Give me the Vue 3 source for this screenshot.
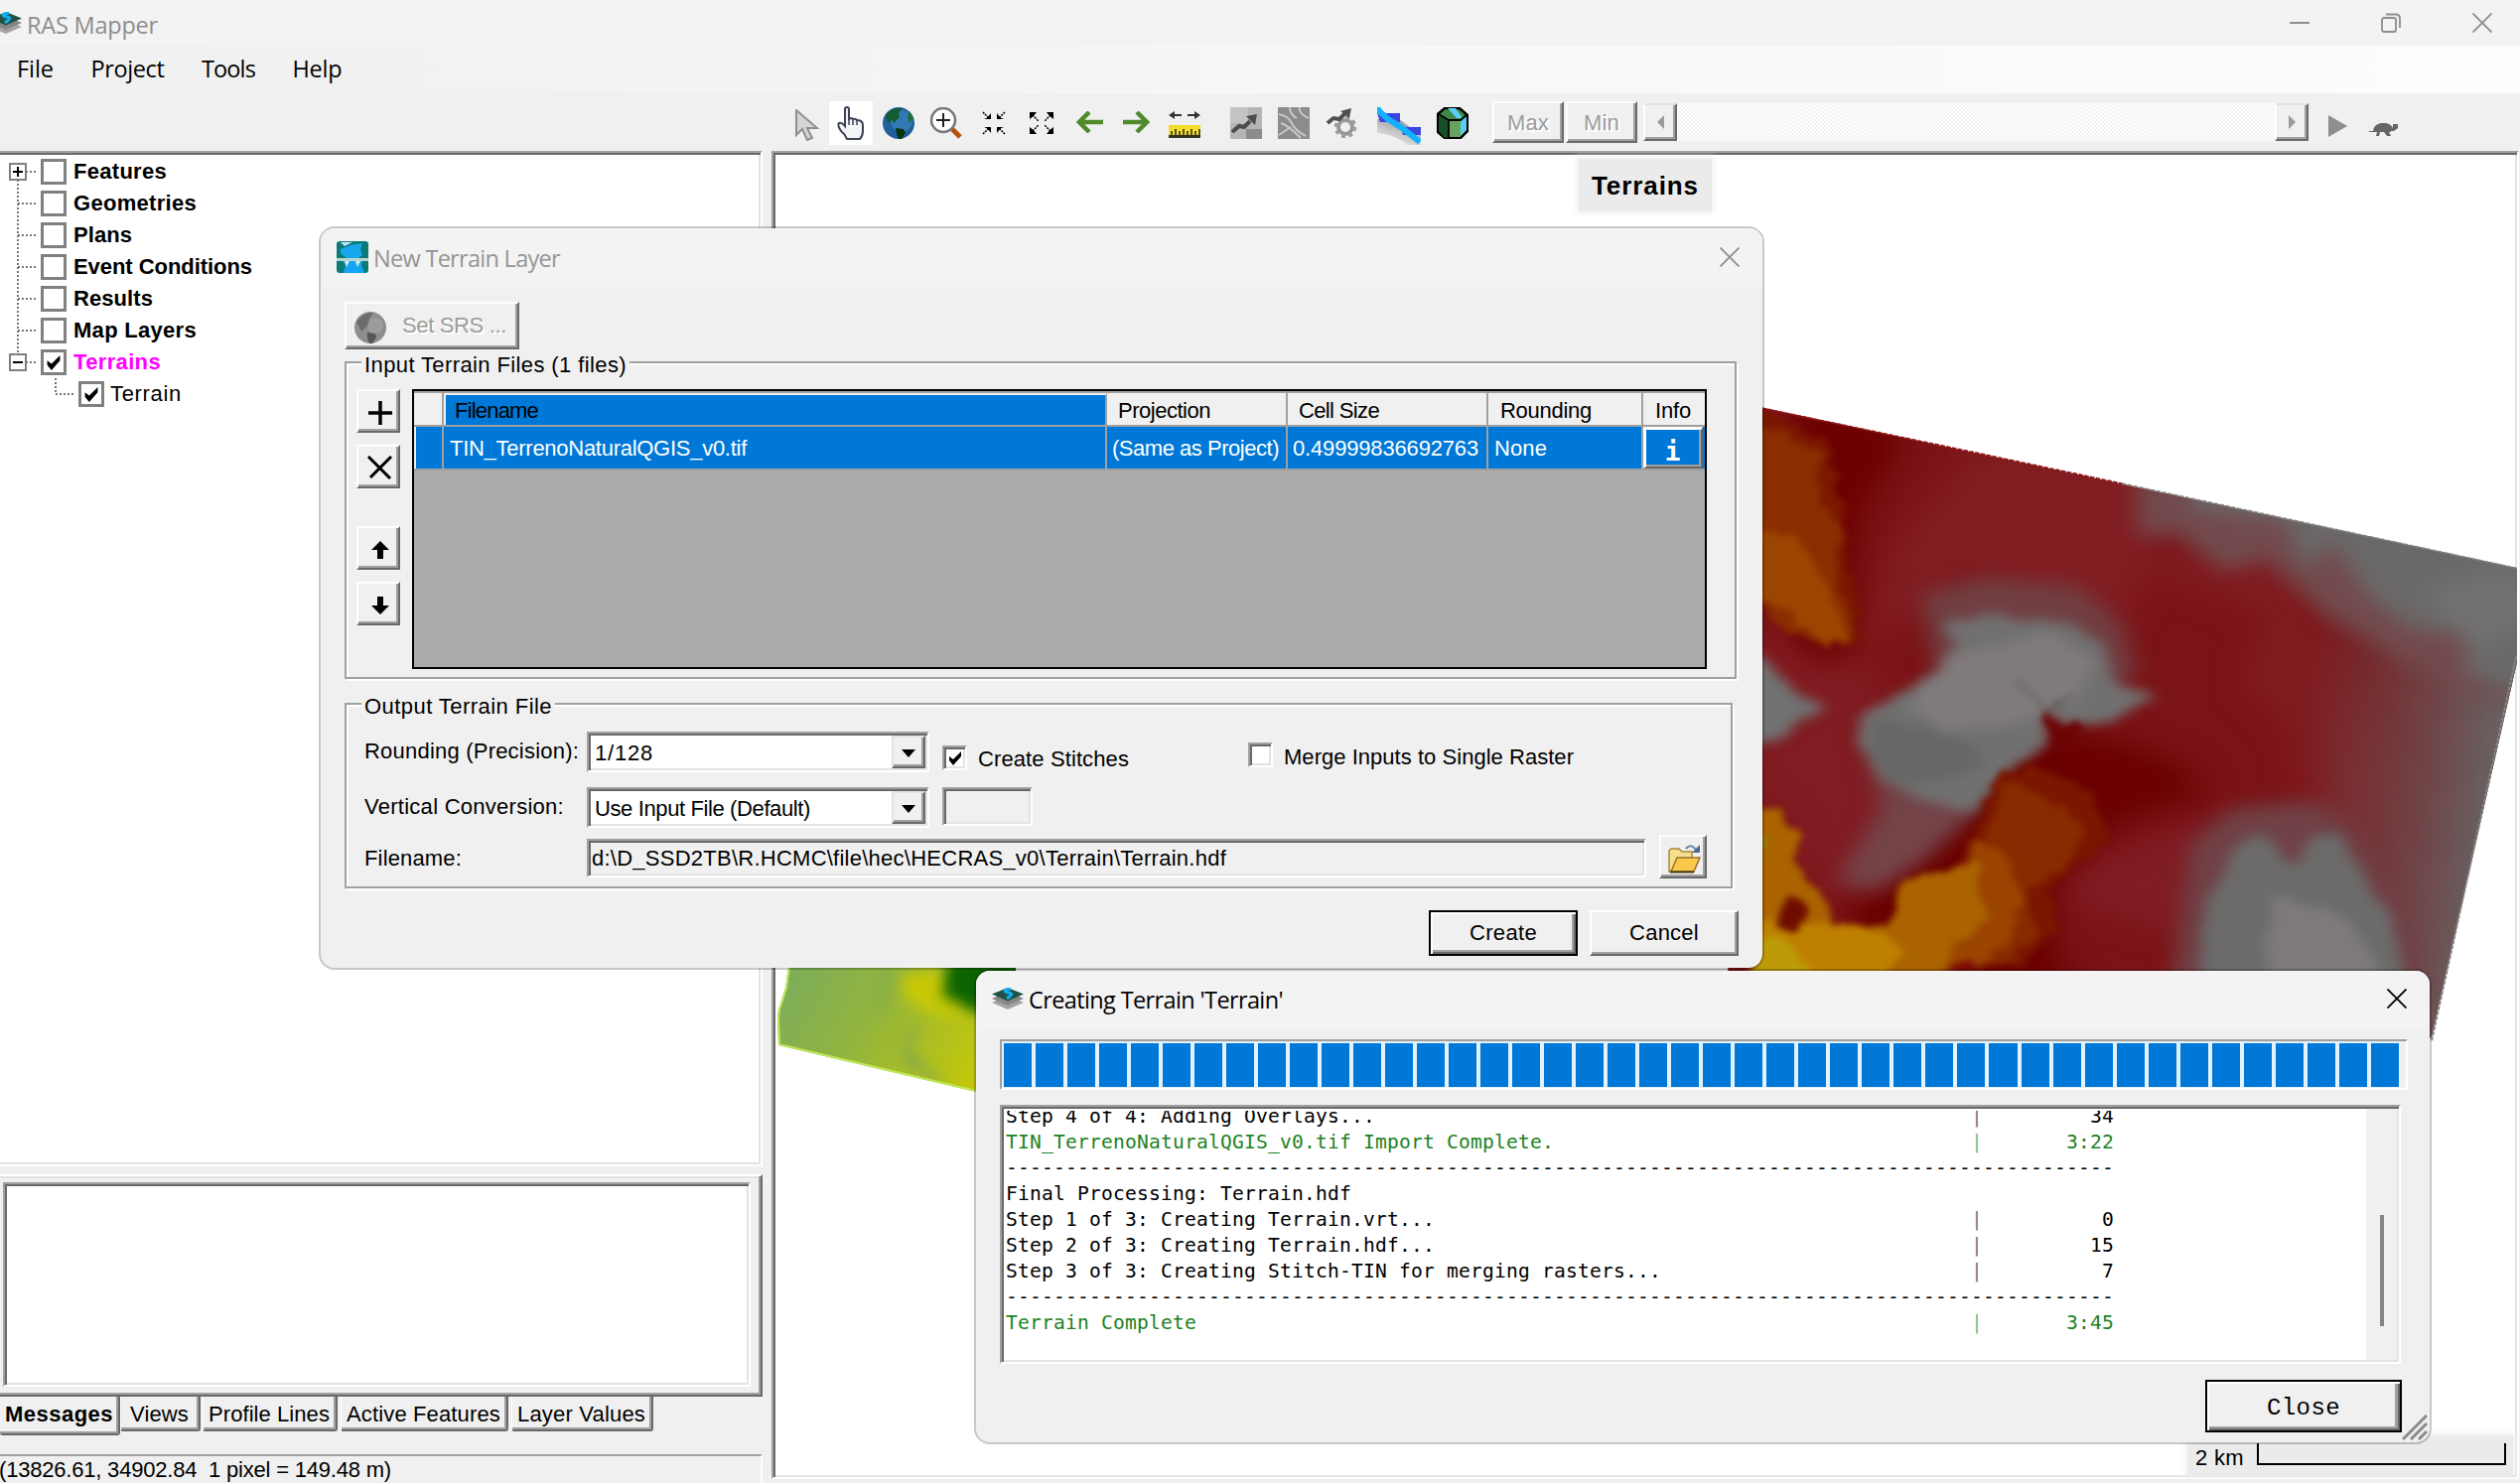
<script setup>
// Spreads or tightens a label so that it takes the given width in pixels
const vFit = {
  mounted(el, { value }) {
    const natural = el.getBoundingClientRect().width
    el.style.letterSpacing = (value - natural) / el.textContent.length + 'px'
  },
}

const menus = [
  { text: 'File', w: 37 },
  { text: 'Project', w: 74 },
  { text: 'Tools', w: 54 },
  { text: 'Help', w: 50 },
]

const nodes = [
  { text: 'Features', w: 94, box: '+', up: false, down: true },
  { text: 'Geometries', w: 124, up: true, down: true },
  { text: 'Plans', w: 59, up: true, down: true },
  { text: 'Event Conditions', w: 180, up: true, down: true },
  { text: 'Results', w: 80, up: true, down: true },
  { text: 'Map Layers', w: 124, up: true, down: true },
  { text: 'Terrains', w: 88, box: '-', up: true, down: false, on: true, hot: true },
]

const tabs = [
  { text: 'Views', w: 59 },
  { text: 'Profile Lines', w: 122 },
  { text: 'Active Features', w: 155 },
  { text: 'Layer Values', w: 129 },
]

const dashes = '-'.repeat(93)
const log = [
  { text: 'Step 4 of 4: Adding Overlays...', time: '34' },
  { text: 'TIN_TerrenoNaturalQGIS_v0.tif Import Complete.', time: '3:22', ok: true },
  { text: dashes },
  { text: 'Final Processing: Terrain.hdf' },
  { text: 'Step 1 of 3: Creating Terrain.vrt...', time: '0' },
  { text: 'Step 2 of 3: Creating Terrain.hdf...', time: '15' },
  { text: 'Step 3 of 3: Creating Stitch-TIN for merging rasters...', time: '7' },
  { text: dashes },
  { text: 'Terrain Complete', time: '3:45', ok: true },
]
</script>

<template>
  <div class="app">
    <svg class="defs" width="0" height="0">
      <symbol id="layers" viewBox="0 0 32 22">
        <path d="M0 15 16 8l16 7-16 7z" fill="#a3a3a3" />
        <path d="M0 11 16 4l16 7-16 7z" fill="#868686" />
        <path d="M0 6.500 16 0l16 6.500-16 7z" fill="#1f5245" />
        <path d="M19 1c-8 1-7 3-2 4s2 3-2 6" fill="none" stroke="#12aef0" stroke-width="3" />
      </symbol>
      <symbol id="check" viewBox="0 0 14 14">
        <path d="M1 5v4l4 5 8-9V0L5 8z" fill="#000" />
      </symbol>
      <symbol id="cross" viewBox="0 0 20 20">
        <path d="M.5.5l19 19M19.500.5l-19 19" fill="none" stroke="currentColor" stroke-width="1.800" />
      </symbol>
    </svg>

    <header class="titlebar">
      <svg class="app-icon" width="32" height="22"><use href="#layers" /></svg>
      <span class="seg" v-fit="132">RAS Mapper</span>
      <div class="win-controls">
        <svg width="20" height="20"><path d="M0 10h20" stroke="#8d8d8d" stroke-width="2" /></svg>
        <svg width="20" height="20" fill="none" stroke="#8d8d8d" stroke-width="1.800"><rect x="1" y="5" width="14" height="14" rx="2" /><path d="M5 1.500h10q4 0 4 4V15" /></svg>
        <svg width="20" height="20"><use href="#cross" /></svg>
      </div>
    </header>

    <nav class="menubar">
      <span v-for="m in menus" :key="m.text" class="menu"><span class="seg" v-fit="m.w">{{ m.text }}</span></span>
    </nav>

    <div class="toolbar">
      <svg class="t-cursor" width="24" height="33" viewBox="0 0 24 33"><path d="M1 1v25l6-6 5 11 5-2-5-10h10z" fill="#d5d5d5" stroke="#8f8f8f" stroke-width="2" /></svg>
      <span class="hand"><svg width="28" height="34" viewBox="0 0 28 34"><path d="M8 18V3q0-2 2-2t2 2v10q3-2 4 0 3-1 4 1 3 0 4 1 2 1 2 4v6q0 5-3 8H10q-2-5-6-8-4-6-2-8 3-1 6 3z" fill="#f4f5f8" stroke="#3c4254" stroke-width="2" /><path d="M16 13v6M20 14v5M12 13v6" stroke="#3c4254" stroke-width="1.500" /></svg></span>
      <svg class="t-globe" width="32" height="32" viewBox="0 0 32 32">
        <circle cx="16" cy="16" r="16" fill="#1f5f9c" /><circle cx="19" cy="14" r="11" fill="#3b86bf" opacity=".7" />
        <path d="M3 8Q9 0 20 1l-4 5 1 4-6 6-2-4-3 5z" fill="#135c2c" /><path d="M13 21l8 1 2 4-4 6h-3l-2-5z" fill="#06340f" /><path d="M27 4l4 7-4 5-2-6z" fill="#1c7038" />
      </svg>
      <svg class="t-zoom" width="32" height="32" viewBox="0 0 32 32"><path d="M22 22l8 8" stroke="#b4530c" stroke-width="5" /><circle cx="13" cy="13" r="12" fill="#fff" stroke="#777" stroke-width="2.500" /><path d="M6 13h14M13 6v14" stroke="#222" stroke-width="2" /></svg>
      <svg class="t-in" width="24" height="24" viewBox="0 0 24 24"><path d="M1 1l6 6M23 1l-6 6M1 23l6-6M23 23l-6-6" stroke="#000" stroke-width="1.500" stroke-dasharray="2 1" /><path d="M2 8h7V2L7 4.500 4.500 7zM22 8h-7V2l2 2.500L19.500 7zM2 16h7v6l-2-2.500L4.500 17zM22 16h-7v6l2-2.500 2.500-2.500z" fill="#000" /></svg>
      <svg class="t-out" width="26" height="24" viewBox="0 0 26 24"><path d="M4 4l6 6M22 4l-6 6M4 20l6-6M22 20l-6-6" stroke="#000" stroke-width="1.500" stroke-dasharray="2 1" /><path d="M1 1h7L6 3.500 3.500 6 1 8zM25 1h-7l2 2.500L22.500 6 25 8zM1 23h7l-2-2.500L3.500 18 1 16zM25 23h-7l2-2.500 2.500-2.500 2.500-2z" fill="#000" /></svg>
      <svg class="t-left" width="28" height="22" viewBox="0 0 28 22"><path d="M13 1L3 11l10 10M3 11h24" fill="none" stroke="#4f8a2c" stroke-width="4.500" /></svg>
      <svg class="t-right" width="28" height="22" viewBox="0 0 28 22"><path d="M15 1l10 10-10 10M25 11H1" fill="none" stroke="#4f8a2c" stroke-width="4.500" /></svg>
      <svg class="t-ruler" width="32" height="27" viewBox="0 0 32 27"><path d="M3 4h10M19 4h10" stroke="#333" stroke-width="2" /><path d="M0 4l6-4v8zM32 4l-6-4v8z" fill="#333" /><path d="M0 14h32v12H0z" fill="#f5dc28" /><path d="M0 25.500h32" stroke="#332" stroke-width="3" /><path d="M3 20v5M7 18v7M11 20v5M15 18v7M19 20v5M23 18v7M27 20v5M31 18v7" stroke="#332" stroke-width="1.600" /></svg>
      <svg class="t-raster" width="32" height="32" viewBox="0 0 32 32"><path d="M0 0h32v32H0z" fill="#b5b5b5" /><path d="M0 0h18v16H0z" fill="#c4c4c4" /><path d="M16 22h16v10H16z" fill="#8c8c8c" /><path d="M2 25l7-6 5 1 6-6" fill="none" stroke="#4c4c4c" stroke-width="4" /><path d="M27 7l-2 11-9-9z" fill="#4c4c4c" /></svg>
      <svg class="t-flow" width="32" height="32" viewBox="0 0 32 32"><path d="M0 0h32v32H0z" fill="#8c8c8c" /><path d="M1 7q10 2 13 9t14 13M3 16q7 2 20 15M12 0q0 7 7 11M22 0q-2 6 9 11M1 28l12-8" fill="none" stroke="#c8c8c8" stroke-width="2" /></svg>
      <svg class="t-gear" width="32" height="32" viewBox="0 0 32 32"><circle cx="20" cy="20" r="7" fill="none" stroke="#989898" stroke-width="4" /><circle cx="20" cy="20" r="10" fill="none" stroke="#989898" stroke-width="2.500" stroke-dasharray="4 3.850" /><path d="M2 16l6-5 6 1 6-6" fill="none" stroke="#505050" stroke-width="4" /><path d="M26 1l-2 10-9-7z" fill="#505050" /></svg>
      <svg class="t-profile" width="44" height="38" viewBox="0 0 44 38"><defs><linearGradient id="pg" x1="0" y1="1" x2=".6" y2="0"><stop offset=".2" stop-color="#e9e9e9" /><stop offset="1" stop-color="#969696" /></linearGradient></defs><path d="M0 12h22l22 16v10H30Q20 28 0 26z" fill="url(#pg)" /><path d="M0 6h23v9H3zM24 20h20v8H26z" fill="#3a46e0" /><path d="M1 0v3l10 9 14 9 18 14" fill="none" stroke="#14b1ff" stroke-width="6" /></svg>
      <svg class="t-cube" width="32" height="32" viewBox="0 0 32 32"><path d="M1 7L8 1h15l8 7v16l-7 7H8l-7-6z" fill="#3f8a4a" stroke="#000" stroke-width="2.500" /><path d="M2 8l9 5 1 17-4 1-6-7z" fill="#174f26" /><path d="M12 13h12v17H12z" fill="#67a35e" /><path d="M11 1h8l7 10h-6z" fill="#59cdf5" /><path d="M24 13l6-4v14l-6 6z" fill="#59cdf5" /><path d="M2 7l10 6h12l6-5M12 13v17" fill="none" stroke="#000" stroke-width="1.800" /></svg>
      <span class="raised btn-max"><span class="ui dis" v-fit="42">Max</span></span>
      <span class="raised btn-min"><span class="ui dis" v-fit="36">Min</span></span>
      <div class="scroll">
        <span class="raised sbtn"><svg width="9" height="14"><path d="M8 0v14L1 7z" fill="#9a9a9a" /></svg></span>
        <span class="raised sbtn"><svg width="9" height="14"><path d="M1 0v14l7-7z" fill="#9a9a9a" /></svg></span>
      </div>
      <svg class="t-play" width="19" height="22"><path d="M0 0v22l19-11z" fill="#8e8e8e" /></svg>
      <svg class="t-turtle" width="30" height="13" viewBox="0 0 30 13"><path d="M0 8h4q1-7 8-8h5q5 1 7 5V1h5v4l-4 3h-3v1h-2l2 4h-4l-3-4h-4l-1 4H7l1-4H0z" fill="#666" /></svg>
    </div>

    <main class="work">
      <aside class="side">
        <div class="tree">
          <div v-for="n in nodes" :key="n.text" class="node">
            <svg width="41" height="32">
              <g stroke="#777" stroke-width="2" stroke-dasharray="2 2">
                <path v-if="n.up" d="M18 0v16" /><path v-if="n.down" d="M18 16v16" /><path d="M18 16h18" />
              </g>
              <template v-if="n.box">
                <rect x="10" y="8" width="16" height="16" fill="#fff" stroke="#808080" stroke-width="2" />
                <path :d="n.box === '+' ? 'M13 16h10M18 11v10' : 'M13 16h10'" stroke="#000" stroke-width="2" />
              </template>
            </svg>
            <span class="tcheck"><svg v-if="n.on" width="16" height="15"><use href="#check" /></svg></span>
            <span class="ui b" :class="{ hot: n.hot }" v-fit="n.w">{{ n.text }}</span>
          </div>
          <div class="node child">
            <svg width="79" height="32"><path d="M56 0v16h18" fill="none" stroke="#777" stroke-width="2" stroke-dasharray="2 2" /></svg>
            <span class="tcheck"><svg width="16" height="15"><use href="#check" /></svg></span>
            <span class="ui" v-fit="72">Terrain</span>
          </div>
        </div>
        <div class="msg-panel"><div class="sunken msg-box"></div></div>
        <div class="tabs">
          <span class="tab active"><span class="ui b" v-fit="109">Messages</span></span>
          <span v-for="t in tabs" :key="t.text" class="tab"><span class="ui" v-fit="t.w">{{ t.text }}</span></span>
        </div>
        <div class="status"><span class="ui" v-fit="395">(13826.61, 34902.84&nbsp; 1 pixel = 149.48 m)</span></div>
      </aside>

      <section class="map sunken">
        <svg class="terrain" width="1754" height="1330" viewBox="781 156 1754 1330">
          <defs>
            <filter id="soft" filterUnits="userSpaceOnUse" x="-100" y="-100" width="1900" height="1900" color-interpolation-filters="sRGB">
              <feTurbulence type="fractalNoise" baseFrequency=".014" numOctaves="3" seed="4" />
              <feDisplacementMap in="SourceGraphic" scale="36" xChannelSelector="R" yChannelSelector="G" />
              <feGaussianBlur stdDeviation="14" />
            </filter>
            <filter id="crisp" x="-20%" y="-20%" width="140%" height="140%" color-interpolation-filters="sRGB">
              <feTurbulence type="fractalNoise" baseFrequency=".03" numOctaves="4" seed="9" />
              <feDisplacementMap in="SourceGraphic" scale="36" xChannelSelector="R" yChannelSelector="G" />
              <feGaussianBlur stdDeviation="7" />
            </filter>
            <filter id="wide" filterUnits="userSpaceOnUse" x="-200" y="-200" width="2100" height="2100" color-interpolation-filters="sRGB"><feGaussianBlur stdDeviation="34" /></filter>
            <filter id="haze" filterUnits="userSpaceOnUse" x="-200" y="-200" width="2100" height="2100" color-interpolation-filters="sRGB"><feGaussianBlur stdDeviation="22" /></filter>
            <clipPath id="east"><path d="M-40 30L20 45 1565 421v200L1388 1510 900 1700H-40z" /></clipPath>
            <clipPath id="west"><path d="M796 960l-5 35-7 22-1 8 1 28 199 47h40V960z" /></clipPath>
            <linearGradient id="wg" x1="0" y1="0" x2="1" y2=".35"><stop offset="0" stop-color="#76ab62" /><stop offset=".5" stop-color="#94b53c" /><stop offset="1" stop-color="#c4c808" /></linearGradient>
            <linearGradient id="fade" gradientUnits="userSpaceOnUse" x1="1130" y1="760" x2="1530" y2="800"><stop offset="0" stop-color="#6a5456" stop-opacity="0" /><stop offset=".55" stop-color="#6d5053" stop-opacity=".7" /><stop offset="1" stop-color="#686464" stop-opacity="1" /></linearGradient>
          </defs>
          <g transform="translate(1760 390) scale(.4963 .4337)">
            <g clip-path="url(#east)">
              <path d="M-50 0h1700v1700H-50z" fill="#7b1417" />
              <g filter="url(#wide)">
                <path d="M100 0l230 100-100 200-20 160-10 160-60 20-60-110z" fill="#6c0000" />
                <path d="M480 130l380 60-100 380-120-80-200-60-200 180 60-240z" fill="#821e22" />
                <path d="M600 790l180 40 120 60 30 60-150 50-110 70-60 200 60 140-500 30 60-300 120-160z" fill="#6a0000" />
                <path d="M780 380l280-30 160 300 100 260-80 220-120-180-20-160-100-100 60-160-240-100z" fill="#801c20" />
                <path d="M600 1170l300-160 60 60-70 210z" fill="#801d24" />
                <path d="M0 540l130 110 120-20 40 250 60 180-100 110-110 20-60-180-100-100z" fill="#801c22" />
              </g>
              <path d="M1060 300h560v1300H1260z" fill="url(#fade)" filter="url(#haze)" />
              <g filter="url(#haze)">
                <path d="M790 200l300 60 560 130v380l-180-60-130-70-170-110-120-130-80 30-100-90-80 10z" fill="#724a4d" />
                <path d="M900 190l200 60 560 130v320l-120 10-90-50 20-80-130-20-90-90-60-110-60 60-40-110-190-30z" fill="#6a6868" />
                <path d="M1370 470l180-60 60 120-130 90z" fill="#717171" />
                <path d="M350 480l130-40 190 20 90 90 30 110-90 100-300 0z" fill="#713f42" />
                <path d="M230 780l250 80 0 110-110 120-110 80-80-20 90-170z" fill="#744449" />
                <path d="M900 1060l80-80 170-20 80 60 100 200 50 180H860z" fill="#704247" />
              </g>
              <g filter="url(#soft)">
                <path d="M400 550l90-20 160 15 75 50 20 90 85 35-60 40-70 25h-60l-30-40v90l-70 50-40 60-40 40-100-20-90-60-50-80 20-60 60-50 90-50 40-60z" fill="#717070" />
                <path d="M420 620l200-50 90 70-40 80-120 60-160 20-60-70z" fill="#7f7a7b" />
                <path d="M270 770l180 50 40 50-90 50-100-10-60-60z" fill="#666" />
                <path d="M-40 590l80 50 115 105-80 60-115 60z" fill="#717171" />
                <path d="M980 1075l70-35 50 65 50-60 50-5 50 90 50 90 40 220H960l-50-110 25-130z" fill="#6b6b6a" />
                <path d="M1070 1180l60 20 110 50 70 180h-250l-10-150z" fill="#7e7a7b" />
              </g>
              <g filter="url(#crisp)">
                <path d="M0 30l100 60 60 40 30 130 10 130 30 140-10 70-60-5-70-90-90-45z" fill="#7a1800" />
                <path d="M0 90l70 10 80 60-10 100 50 70-10 130 40 90-10 50-130-30-80-100z" fill="#8a2e00" />
                <path d="M0 330l90 10 70 110 45 140-45 10-80-80-80-40z" fill="#9c4500" />
                <path d="M510 900l60-20 130 60 30 110-80 80-40 40 20 90-80 90H290l150-260z" fill="#7a1700" />
                <path d="M515 920l80 20 90 90-40 80-80 60 20 100-70 80H320l150-240z" fill="#882b00" />
                <path d="M470 1050l60 40 30 100-30 100-90 80H290l20-200 130-60z" fill="#9a4400" />
                <path d="M0 980l60 0 50 60-20 60 60 80 30 80 110-15 20-85 60-30 60-20 40-10 0 80 20 60-70 60-40 100H0z" fill="#aa6300" />
                <path d="M0 1250l80-10 180 20 60 50-60 80H0z" fill="#be8000" />
                <path d="M0 1270l70 10 80 100H0z" fill="#bc9a08" />
                <ellipse cx="92" cy="1226" rx="28" ry="42" fill="#6e0c00" />
                <path d="M-10 1040l50 10-20 60H-10z" fill="#849012" />
                <path d="M380 1410q60-150 120 0z" fill="#7a0a06" />
              </g>
              <g filter="url(#crisp)">
                <path d="M548 685l60 72 45-42" fill="none" stroke="#5f5a5b" stroke-width="6" />
                <path d="M595 750l30 30 40 0 20 15-60 50z" fill="#6c0404" />
              </g>
            </g>
            <path d="M30 49L420 142 760 224" fill="none" stroke="#92181c" stroke-width="4" stroke-dasharray="9 3" />
            <path d="M760 224l802 197M1560 625L1388 1520" fill="none" stroke="#858585" stroke-width="4" stroke-dasharray="9 3" />
          </g>
          <g clip-path="url(#west)">
            <path d="M780 950h250v160H780z" fill="url(#wg)" />
            <g filter="url(#crisp)">
              <path d="M905 995l30-18 20 14 40 22-30 13-40-10z" fill="#c8c806" />
              <path d="M955 950h90v75l-60-8-40-18z" fill="#0b6400" />
              <path d="M890 960v36l6 20M922 1040l-8 20 10 20 25 10" fill="none" stroke="#7da552" stroke-width="8" />
            </g>
            <path d="M796 960l-5 35-7 22-1 8 1 28 199 47" fill="none" stroke="#bfe858" stroke-width="4" />
          </g>
        </svg>
        <div class="map-title"><span class="ui b" v-fit="108">Terrains</span></div>
        <div class="scale"><span class="ui" v-fit="49">2 km</span><span class="scale-bar"></span></div>
      </section>
    </main>

    <section class="dialog terrain-dlg">
      <header class="dlg-title">
        <svg width="32" height="32" viewBox="0 0 32 32"><rect width="32" height="32" rx="3" fill="#0c7a78" /><path d="M4 8l10-4 12-2-2 6 2 6-4 3H10L4 12z" fill="#18a8ee" /><path d="M4 1h12l-8 4z" fill="#bfe8f6" /><path d="M0 17h32v3H0z" fill="#b9d3cf" /><path d="M6 20h20l-1 4 3 8H7l2-8z" fill="#12a6f4" /><path d="M8 20l2 6 3-6zM19 20l2 6 3-6z" fill="#d8ebe8" /></svg>
        <span class="seg dim" v-fit="188">New Terrain Layer</span>
        <svg class="x" width="20" height="20"><use href="#cross" /></svg>
      </header>
      <div class="dlg-body">
        <span class="raised srs">
          <svg width="32" height="32" viewBox="0 0 32 32"><circle cx="16" cy="16" r="16" fill="#8e8e8e" /><path d="M2 10Q8 1 19 1l-4 6 1 4-6 6-3 3z" fill="#6c6c6c" /><path d="M13 21l8 1 1 4-4 6h-3l-2-5z" fill="#565656" /><circle cx="21" cy="14" r="8" fill="#a2a2a2" opacity=".7" /></svg>
          <span class="ui dis" v-fit="105">Set SRS ...</span>
        </span>

        <div class="group g1">
          <span class="legend"><span class="ui" v-fit="264">Input Terrain Files (1 files)</span></span>
          <div class="tools">
            <span class="raised"><svg width="24" height="24"><path d="M0 12h24M12 0v24" stroke="#000" stroke-width="3.500" /></svg></span>
            <span class="raised"><svg width="26" height="24"><path d="M2 1l22 22M25 1L4 22" stroke="#000" stroke-width="3" /></svg></span>
            <span class="raised gap"><svg width="18" height="18"><path d="M9 0l9 9h-6v9H6V9H0z" /></svg></span>
            <span class="raised"><svg width="18" height="18"><path d="M9 18l9-9h-6V0H6v9H0z" /></svg></span>
          </div>
          <div class="table">
            <div class="tr head">
              <span class="c0"></span>
              <span class="c1 sel"><span class="ui" v-fit="84">Filename</span></span>
              <span class="c2"><span class="ui" v-fit="93">Projection</span></span>
              <span class="c3"><span class="ui" v-fit="81">Cell Size</span></span>
              <span class="c4"><span class="ui" v-fit="92">Rounding</span></span>
              <span class="c5"><span class="ui" v-fit="36">Info</span></span>
            </div>
            <div class="tr row">
              <span class="c0"></span>
              <span class="c1"><span class="ui" v-fit="299">TIN_TerrenoNaturalQGIS_v0.tif</span></span>
              <span class="c2"><span class="ui" v-fit="168">(Same as Project)</span></span>
              <span class="c3"><span class="ui" v-fit="187">0.49999836692763</span></span>
              <span class="c4"><span class="ui" v-fit="53">None</span></span>
              <span class="c5 raised info">i</span>
            </div>
          </div>
        </div>

        <div class="group g2">
          <span class="legend"><span class="ui" v-fit="189">Output Terrain File</span></span>
          <div class="frow r1">
            <span class="lab"><span class="ui" v-fit="216">Rounding (Precision):</span></span>
            <div class="sunken combo"><span class="ui" v-fit="59">1/128</span><span class="raised drop"><svg width="14" height="8"><path d="M0 0h14L7 8z" /></svg></span></div>
            <span class="sunken cb c-stitch"><svg width="14" height="14"><use href="#check" /></svg></span>
            <span class="ui cb-lab1" v-fit="152">Create Stitches</span>
            <span class="sunken cb c-merge"></span>
            <span class="ui cb-lab2" v-fit="292">Merge Inputs to Single Raster</span>
          </div>
          <div class="frow r2">
            <span class="lab"><span class="ui" v-fit="201">Vertical Conversion:</span></span>
            <div class="sunken combo"><span class="ui" v-fit="217">Use Input File (Default)</span><span class="raised drop"><svg width="14" height="8"><path d="M0 0h14L7 8z" /></svg></span></div>
            <span class="sunken off"></span>
          </div>
          <div class="frow r3">
            <span class="lab"><span class="ui" v-fit="98">Filename:</span></span>
            <div class="sunken path"><span class="ui" v-fit="639">d:\D_SSD2TB\R.HCMC\file\hec\HECRAS_v0\Terrain\Terrain.hdf</span></div>
            <span class="raised folder">
              <svg width="33" height="30" viewBox="0 0 33 30"><path d="M1 28V7l2-2h8l3 3h10v20z" fill="#f6df8e" stroke="#a88a3c" stroke-width="1.500" /><path d="M3 28l6-14h23l-6 14z" fill="#fbc94a" stroke="#96722a" stroke-width="1.500" /><path d="M2 28.500h24" stroke="#4a390e" stroke-width="2" /><path d="M18 5q5-6 10 1" fill="none" stroke="#6d87ab" stroke-width="2" /><path d="M32 1v8h-8z" fill="#4d6b94" /></svg>
            </span>
          </div>
        </div>

        <div class="actions">
          <span class="raised def"><span class="ui" v-fit="68">Create</span></span>
          <span class="raised"><span class="ui" v-fit="70">Cancel</span></span>
        </div>
      </div>
    </section>

    <section class="dialog progress-dlg">
      <header class="dlg-title">
        <svg width="32" height="22"><use href="#layers" /></svg>
        <span class="seg" v-fit="256">Creating Terrain 'Terrain'</span>
        <svg class="x dark" width="20" height="20"><use href="#cross" /></svg>
      </header>
      <div class="dlg-body">
        <div class="progress"><i v-for="n in 44" :key="n"></i></div>
        <div class="sunken log">
          <div class="lines">
            <div v-for="(l, i) in log" :key="i" class="ln" :class="{ ok: l.ok }">
              <span class="what"><span v-fit="l.text.length * 12">{{ l.text }}</span></span>
              <template v-if="l.time"><span class="bar">|</span><span class="time"><span v-fit="l.time.length * 12">{{ l.time }}</span></span></template>
            </div>
          </div>
          <div class="vbar"><span></span></div>
        </div>
        <span class="raised def close"><span v-fit="74">Close</span></span>
      </div>
      <svg class="grip" width="26" height="26"><path d="M1 25L25 1M9 25L25 9M17 25l8-8" stroke="#8a8a8a" stroke-width="3" /></svg>
    </section>
  </div>
</template>

<style>
body { margin: 0; background: #f0f0f0; }
</style>

<style scoped>
.app { position: relative; width: 2538px; height: 1494px; overflow: hidden; display: flex; flex-direction: column; background: #f0f0f0; color: #000; font: 22px/26px "Liberation Sans", Arial, sans-serif; }
.app * { box-sizing: border-box; }
.defs { position: absolute; }
svg { display: block; flex: none; }
.ui { display: inline-block; white-space: pre; font: 22px/26px "Liberation Sans", Arial, sans-serif; }
.ui.b { font-weight: 700; }
.seg { display: inline-block; white-space: pre; font: 23.5px/30px "Open Sans", "Noto Sans", sans-serif; }
.dis { color: #9d9d9d; text-shadow: 2px 2px #fff; }
.dim { color: #959595; }
.raised { display: flex; align-items: center; justify-content: center; flex: none; background: #f0f0f0; border: 2px solid; border-color: #fff #696969 #696969 #fff; box-shadow: inset -2px -2px #a0a0a0; }
.sunken { display: flex; flex: none; background: #fff; border: 2px solid; border-color: #a0a0a0 #fff #fff #a0a0a0; padding: 2px; box-shadow: inset 2px 2px #696969, inset -2px -2px #e3e3e3; }

.titlebar { height: 46px; flex: none; display: flex; align-items: center; background: #f3f3f3; color: #8d8d8d; }
.app-icon { margin-left: -10px; margin-right: 5px; }
.titlebar .seg { margin-top: 3px; }
.win-controls { margin-left: auto; margin-right: 28px; display: flex; gap: 72px; color: #8d8d8d; }
.menubar { height: 48px; flex: none; display: flex; align-items: center; padding: 0 0 2px 17px; gap: 38px; background: linear-gradient(90deg, #f0f0f0 0%, #f3f3f3 30%, #f8f8f8 60%, #fdfdfd 100%); }
.menu + .menu { margin-left: -.5px; }
.toolbar { height: 58px; flex: none; display: flex; align-items: flex-start; padding-left: 801px; }
.t-cursor { margin-top: 16px; }
.hand { margin: 8px 0 0 10px; width: 44px; height: 44px; background: #fff; display: flex; justify-content: center; padding-top: 5px; }
.t-globe { margin: 14px 0 0 10px; }
.t-zoom { margin: 14px 0 0 16px; }
.t-in { margin: 18px 1px 0 20px; }
.t-out { margin: 18px 0 0 22px; }
.t-left { margin: 18px 0 0 22px; }
.t-right { margin: 18px 0 0 18px; }
.t-ruler { margin: 18px 0 0 19px; }
.t-raster { margin: 14px 0 0 30px; }
.t-flow { margin: 14px 0 0 16px; }
.t-gear { margin: 14px 0 0 16px; }
.t-profile { margin: 14px 0 0 20px; }
.t-cube { margin: 14px 0 0 16px; }
.btn-max, .btn-min { width: 72px; height: 42px; margin-top: 8px; padding-top: 2px; }
.btn-max { margin-left: 24px; }
.btn-min { margin-left: 2px; }
.scroll { width: 670px; height: 38px; margin: 10px 0 0 6px; display: flex; justify-content: space-between; background: repeating-conic-gradient(#fff 0 25%, #f3f3f3 0 50%) 0 0 / 4px 4px; }
.sbtn { width: 34px; border-top-color: #e3e3e3; }
.t-play { margin: 22px 0 0 20px; }
.t-turtle { margin: 30px 0 0 22px; }

.work { flex: 1; min-height: 0; display: flex; }
.side { width: 768px; flex: none; margin-right: 9px; display: flex; flex-direction: column; }
.tree { height: 1023px; flex: none; background: #fff; border: 2px solid; border-color: #a0a0a0 #fff #fff; border-left: 0; box-shadow: inset 0 2px #696969, inset -2px -2px #e3e3e3; padding-top: 3px; }
.node { height: 32px; display: flex; align-items: center; }
.node .ui { margin-top: -1px; }
.tcheck { width: 26px; height: 26px; border: 3px solid #808080; margin-right: 7px; display: flex; align-items: center; justify-content: center; }
.child .tcheck { margin-right: 6px; }
.hot { color: #f0f; }
.msg-panel { height: 224px; flex: none; margin-top: 8px; padding: 6px 0 0 3px; border: solid; border-width: 2px 2px 2px 0; border-color: #fff #696969 #696969; box-shadow: inset -2px -2px #a0a0a0, inset 0 2px #e3e3e3; }
.msg-box { width: 753px; height: 206px; }
.tabs { display: flex; align-items: flex-start; height: 58px; flex: none; }
.tab { height: 35px; padding: 5px 6px 0 5px; margin-right: 3px; border-right: 2px solid #696969; border-bottom: 2px solid #696969; border-left: 1px solid #fff; border-radius: 0 0 3px 3px; box-shadow: inset -2px -2px #a0a0a0; }
.tab.active { height: 39px; width: 121px; padding-left: 5px; padding-right: 0; margin-right: 0; border-left: 0; }
.tab:nth-child(2) { padding-left: 9px; padding-right: 10px; margin-right: 2px; }
.status { flex: 1; border-top: 2px solid #a0a0a0; border-right: 2px solid #fff; overflow: hidden; white-space: nowrap; }
.status .ui { margin: 1px 0 0 -1px; }

.map { position: relative; width: 1760px; height: 1338px; }
.map-title { position: absolute; left: 811px; top: 6px; width: 134px; height: 53px; display: flex; align-items: center; justify-content: center; background: #ebebeb; box-shadow: 0 0 6px 2px #f0f0f0; }
.map-title .ui { font-size: 26px; line-height: 30px; }
.scale { position: absolute; left: 1424px; top: 1292px; width: 328px; height: 40px; display: flex; padding: 10px 0 0 8px; background: #ebebeb; box-shadow: 0 0 6px 2px #f0f0f0; }
.scale-bar { margin-left: 13px; width: 251px; height: 22px; margin-top: -2px; border: 2px solid #000; border-top: 0; }

.dialog { position: absolute; display: flex; flex-direction: column; background: #f0f0f0; background-clip: padding-box; border: 2px solid rgba(0, 0, 0, .22); border-radius: 16px; }
.terrain-dlg { left: 321px; top: 228px; width: 1456px; height: 749px; }
.progress-dlg { left: 981px; top: 976px; width: 1468px; height: 479px; }
.dlg-title { flex: none; display: flex; align-items: center; background: #f3f3f3; border-radius: 14px 14px 0 0; }
.terrain-dlg .dlg-title { height: 60px; padding: 0 23px 3px 16px; }
.progress-dlg .dlg-title { height: 60px; padding: 0 23px 4px 16px; }
.dlg-title .seg { margin: 2px 0 0 5px; }
.x { margin-left: auto; color: #8d8d8d; }
.x.dark { color: #000; }
.dlg-body { padding-left: 24px; }
.srs { width: 176px; height: 48px; margin-top: 14px; justify-content: flex-start; padding: 4px 0 0 8px; }
.srs .ui { margin: -4px 0 0 16px; }
.group { position: relative; border: 2px solid #a0a0a0; box-shadow: 2px 2px #fff, inset 2px 2px #fff; }
.legend { position: absolute; left: 15px; top: -11px; padding: 0 3px; background: #f0f0f0; }
.g1 { width: 1402px; height: 320px; margin-top: 12px; display: flex; padding: 26px 0 0 10px; }
.tools { width: 44px; display: flex; flex-direction: column; gap: 12px; }
.tools .raised { height: 44px; padding: 4px 0 0 4px; }
.tools .raised:nth-child(2) { padding: 2px 0 0 2px; }
.tools .gap { margin-top: 26px; }
.table { margin-left: 12px; width: 1304px; height: 282px; background: #ababab; border: 2px solid #000; }
.tr { display: flex; }
.tr > span { flex: none; display: flex; align-items: center; padding-top: 2px; }
.head { height: 36px; border-top: 2px solid #a0a0a0; border-bottom: 2px solid #a0a0a0; background: #f0f0f0; }
.row { height: 44px; background: #0078d7; color: #fff; border-bottom: 2px solid #a0a0a0; }
.c0 { width: 30px; border-right: 2px solid #a0a0a0; border-left: 2px solid #f0f0f0; }
.c1 { width: 668px; border-right: 2px solid #a0a0a0; padding-left: 6px; }
.c2 { width: 182px; border-right: 2px solid #a0a0a0; padding-left: 5px; }
.c3 { width: 202px; border-right: 2px solid #a0a0a0; padding-left: 5px; }
.c4 { width: 156px; border-right: 2px solid #a0a0a0; padding-left: 6px; }
.c5 { width: 60px; }
.head > span { padding-top: 3px; }
.head .c1 { background: #0078d7; border-left: 2px solid #f0f0f0; border-top: 2px solid #f0f0f0; padding-left: 9px; padding-top: 2px; }
.head .c2, .head .c3 { padding-left: 11px; }
.head .c4, .head .c5 { padding-left: 12px; }
.row .info { background: #0078d7; justify-content: center; height: 42px; padding: 6px 2px 0 0; font: 700 26px/26px "DejaVu Sans Mono", monospace; border-left-width: 3px; border-top-width: 3px; }
.g2 { width: 1398px; height: 187px; margin-top: 24px; padding: 27px 0 0 18px; }
.frow { display: flex; }
.lab { width: 224px; flex: none; padding-top: 7px; }
.r1 { height: 41px; }
.r2 { height: 40px; margin-top: 15px; }
.r3 { height: 44px; margin-top: 8px; }
.combo { width: 345px; height: 41px; align-items: center; justify-content: space-between; padding-left: 6px; }
.combo > .ui { margin-top: 2px; }
.drop { width: 34px; height: 33px; border-color: #e3e3e3 #696969 #696969 #e3e3e3; padding-top: 3px; }
.cb { width: 25px; height: 25px; align-items: center; justify-content: center; }
.c-stitch { margin: 14px 0 0 13px; }
.cb-lab1 { margin: 15px 0 0 11px; }
.c-merge { margin: 11px 0 0 120px; }
.cb-lab2 { margin: 13px 0 0 11px; }
.off { width: 91px; height: 39px; margin-left: 13px; background: #f0f0f0; }
.r3 .lab { padding-top: 11px; }
.path { width: 1067px; height: 39px; margin-top: 4px; background: #f0f0f0; align-items: center; padding-left: 3px; }
.folder { width: 48px; height: 44px; margin-left: 13px; padding: 4px 0 0 2px; }
.actions { display: flex; gap: 12px; margin: 22px 0 0 1092px; }
.actions .raised { width: 150px; height: 46px; }
.actions .def { border-color: #000; box-shadow: inset 2px 2px #fff, inset -2px -2px #696969, inset -4px -4px #a0a0a0; }

.progress { margin-top: 9px; width: 1418px; height: 51px; border: 2px solid; border-color: #a0a0a0 #fff #fff #a0a0a0; padding: 2px 7px 1px 2px; display: flex; gap: 4px; background: linear-gradient(90deg, #e5f1fb 1407px, #f0f0f0 0); }
.progress i { flex: 1; background: #0078d7; }
.log { margin-top: 15px; width: 1411px; height: 261px; justify-content: space-between; }
.lines { margin-top: 2px; overflow: hidden; padding-left: 2px; font: 19.600px/26px "DejaVu Sans Mono", monospace; }
.ln { height: 26px; white-space: pre; display: flex; }
.ln > span { flex: none; }
.ln:first-child { margin-top: -7px; }
.what { width: 972px; }
.what span, .time span { display: inline-block; }
.bar { width: 12px; color: #777; }
.ok .bar { color: #6fbf80; }
.time { width: 132px; text-align: right; }
.ok { color: #1e8224; }
.vbar { width: 31px; background: #f0f0f0; padding: 107px 0 0 14px; }
.vbar span { display: block; width: 4px; height: 112px; background: #858585; }
.close { width: 198px; height: 53px; margin: 16px 0 0 1214px; padding-top: 4px; font: 24px/28px "Liberation Mono", monospace; border-color: #000; box-shadow: inset 2px 2px #fff, inset -2px -2px #696969, inset -5px -4px #a0a0a0; }
.grip { position: absolute; right: 2px; bottom: 2px; }
</style>
